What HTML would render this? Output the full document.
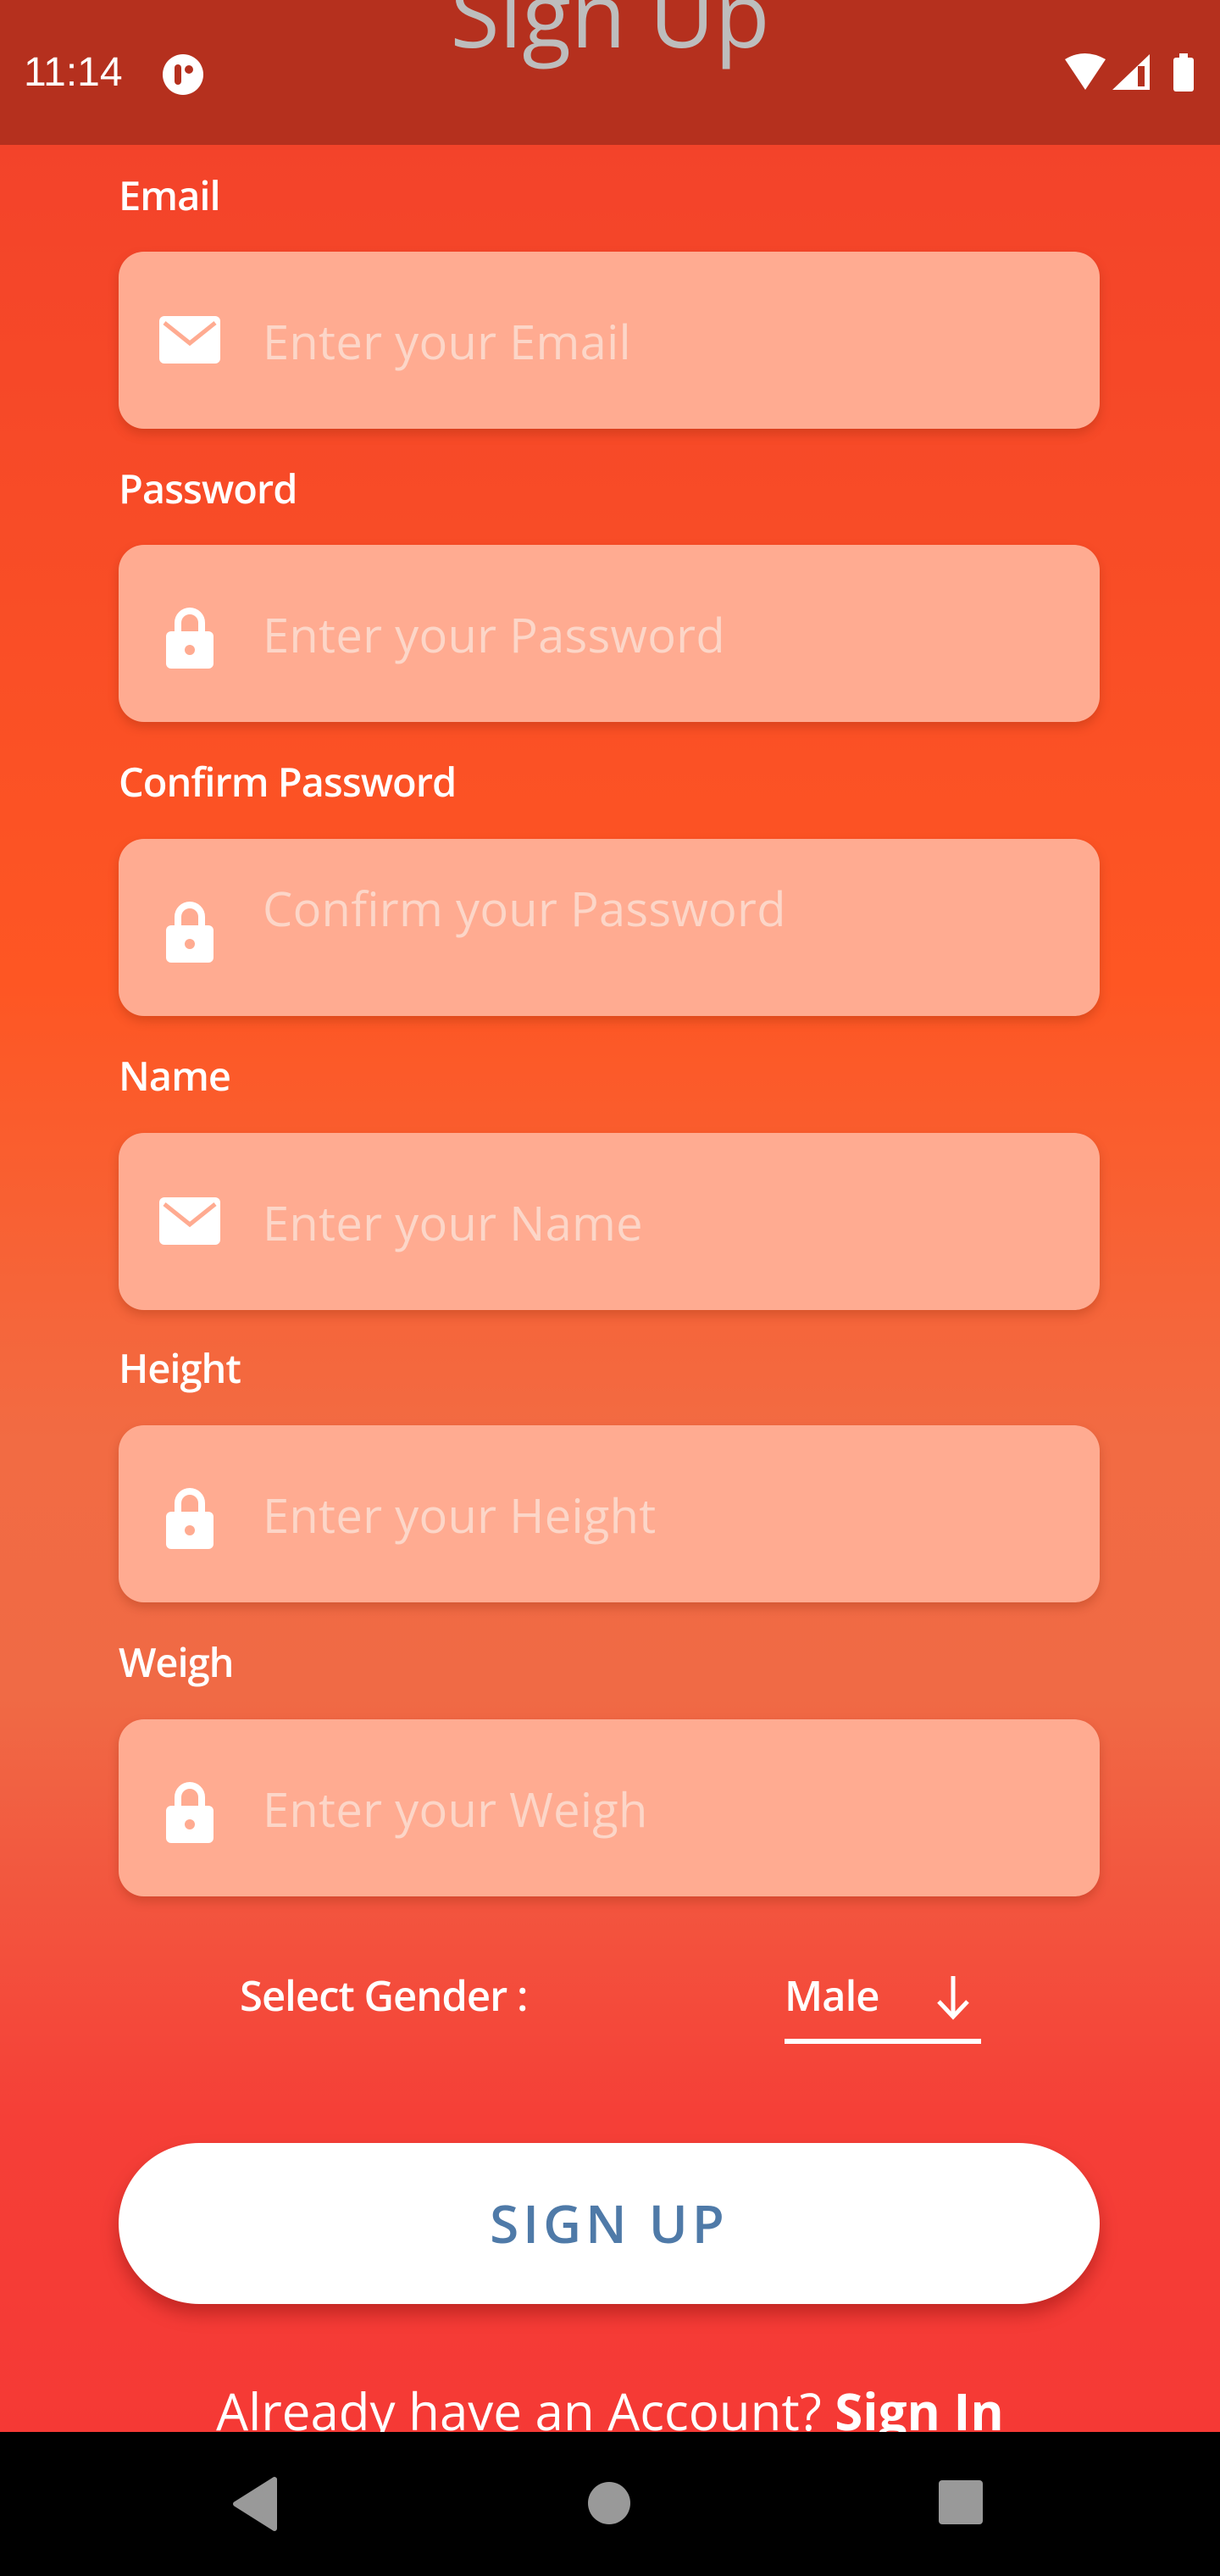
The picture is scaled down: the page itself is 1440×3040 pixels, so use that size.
<!DOCTYPE html>
<html><head><meta charset="utf-8"><style>
*{margin:0;padding:0;box-sizing:border-box}
body{width:1440px;height:3040px;overflow:hidden;font-family:"Open Sans","Liberation Sans",sans-serif;position:relative;
background:linear-gradient(180deg,#f3432a 171px,#fe5623 1160px,#f26b43 1700px,#f06a45 2000px,#f53f37 2500px,#f53935 2870px);}
.hdr{position:absolute;left:0;top:0;width:1440px;height:171px;background:#b5301e;overflow:hidden}
.title{position:absolute;left:0;width:1440px;text-align:center;top:-56px;font-size:106px;color:#bdbdbd;}
.time{position:absolute;left:28px;top:58px;font-size:48px;color:#fff;font-family:"Liberation Sans",sans-serif}
.lbl{position:absolute;left:140px;font-size:47px;color:#fff;font-weight:600;letter-spacing:-1px}
.fld{position:absolute;left:140px;width:1158px;height:209px;background:#ffab91;border-radius:30px;box-shadow:0 6px 12px rgba(120,30,0,.25)}
.ph{position:absolute;left:170px;top:2px;line-height:209px;font-size:56px;color:#fcd6c8;letter-spacing:.3px}
.ic{position:absolute;left:48px;top:70px}
.g{position:absolute;top:2322px;font-size:49px;color:#fff;font-weight:600;letter-spacing:-1px}
.btn{position:absolute;left:140px;top:2529px;width:1158px;height:190px;background:#fff;border-radius:95px;box-shadow:0 12px 20px rgba(100,0,0,.35);text-align:center;line-height:190px;font-size:62px;color:#4f7aa8;letter-spacing:5px;font-weight:600}
.acc{position:absolute;left:0;width:1440px;top:2800px;text-align:center;font-size:60px;color:#fff;height:70px;overflow:hidden;line-height:90px}
.nav{position:absolute;left:0;top:2870px;width:1440px;height:170px;background:#000}
</style></head><body>
<div class="hdr"><div class="title">Sign Up</div>
<div class="time">11:14</div>
<svg style="position:absolute;left:190px;top:62px" width="52" height="52" viewBox="0 0 52 52"><circle cx="26" cy="26" r="24" fill="#fff"/><rect x="16" y="14" width="8" height="24" rx="4" fill="#b5301e"/><circle cx="33" cy="20" r="5" fill="#b5301e"/></svg>
<svg style="position:absolute;left:1255px;top:60px" width="160" height="50" viewBox="0 0 160 50"><path d="M2 10 Q25 -4 50 10 L26 46Z" fill="#fff"/><path d="M58 46 L102 4 V46Z" fill="#fff"/><rect x="88" y="18" width="8" height="24" fill="#b5301e"/><rect x="130" y="8" width="24" height="40" rx="3" fill="#fff"/><rect x="137" y="3" width="10" height="6" fill="#fff"/></svg>
</div>

<div class="lbl" style="top:198px">Email</div>
<div class="fld" style="top:297px"><svg class="ic" width="72" height="70" viewBox="0 0 72 70"><rect x="0" y="6" width="72" height="56" rx="6" fill="#fff"/><path d="M6 14 L36 38 L66 14" stroke="#ffab91" stroke-width="5" fill="none"/></svg><div class="ph">Enter your Email</div></div>

<div class="lbl" style="top:544px">Password</div>
<div class="fld" style="top:643px"><svg class="ic" width="72" height="76" viewBox="0 0 72 76"><path d="M22 34 V22 a14 14 0 0 1 28 0 V34" stroke="#fff" stroke-width="8" fill="none"/><rect x="8" y="32" width="56" height="44" rx="6" fill="#fff"/><circle cx="36" cy="54" r="6" fill="#ffab91"/></svg><div class="ph">Enter your Password</div></div>

<div class="lbl" style="top:890px">Confirm Password</div>
<div class="fld" style="top:990px"><svg class="ic" width="72" height="76" viewBox="0 0 72 76"><path d="M22 34 V22 a14 14 0 0 1 28 0 V34" stroke="#fff" stroke-width="8" fill="none"/><rect x="8" y="32" width="56" height="44" rx="6" fill="#fff"/><circle cx="36" cy="54" r="6" fill="#ffab91"/></svg><div class="ph" style="line-height:160px">Confirm your Password</div></div>

<div class="lbl" style="top:1237px">Name</div>
<div class="fld" style="top:1337px"><svg class="ic" width="72" height="70" viewBox="0 0 72 70"><rect x="0" y="6" width="72" height="56" rx="6" fill="#fff"/><path d="M6 14 L36 38 L66 14" stroke="#ffab91" stroke-width="5" fill="none"/></svg><div class="ph">Enter your Name</div></div>

<div class="lbl" style="top:1582px">Height</div>
<div class="fld" style="top:1682px"><svg class="ic" width="72" height="76" viewBox="0 0 72 76"><path d="M22 34 V22 a14 14 0 0 1 28 0 V34" stroke="#fff" stroke-width="8" fill="none"/><rect x="8" y="32" width="56" height="44" rx="6" fill="#fff"/><circle cx="36" cy="54" r="6" fill="#ffab91"/></svg><div class="ph">Enter your Height</div></div>

<div class="lbl" style="top:1929px">Weigh</div>
<div class="fld" style="top:2029px"><svg class="ic" width="72" height="76" viewBox="0 0 72 76"><path d="M22 34 V22 a14 14 0 0 1 28 0 V34" stroke="#fff" stroke-width="8" fill="none"/><rect x="8" y="32" width="56" height="44" rx="6" fill="#fff"/><circle cx="36" cy="54" r="6" fill="#ffab91"/></svg><div class="ph">Enter your Weigh</div></div>

<div class="g" style="left:283px">Select Gender :</div>
<div class="g" style="left:926px">Male</div>
<svg style="position:absolute;left:1100px;top:2330px" width="50" height="56" viewBox="0 0 50 56"><path d="M25 2 V50 M8 32 L25 50 L42 32" stroke="#fff" stroke-width="5" fill="none"/></svg>
<div style="position:absolute;left:926px;top:2406px;width:232px;height:6px;background:#fff"></div>

<div class="btn">SIGN UP</div>
<div class="acc">Already have an Account? <b>Sign In</b></div>
<div class="nav">
<svg style="position:absolute;left:270px;top:50px" width="60" height="70" viewBox="0 0 60 70"><path d="M54 6 V64 L8 35Z" fill="#999" stroke="#999" stroke-width="6" stroke-linejoin="round"/></svg>
<div style="position:absolute;left:694px;top:59px;width:50px;height:50px;border-radius:50%;background:#999"></div>
<div style="position:absolute;left:1108px;top:57px;width:52px;height:52px;border-radius:4px;background:#999"></div>
</div>
</body></html>
